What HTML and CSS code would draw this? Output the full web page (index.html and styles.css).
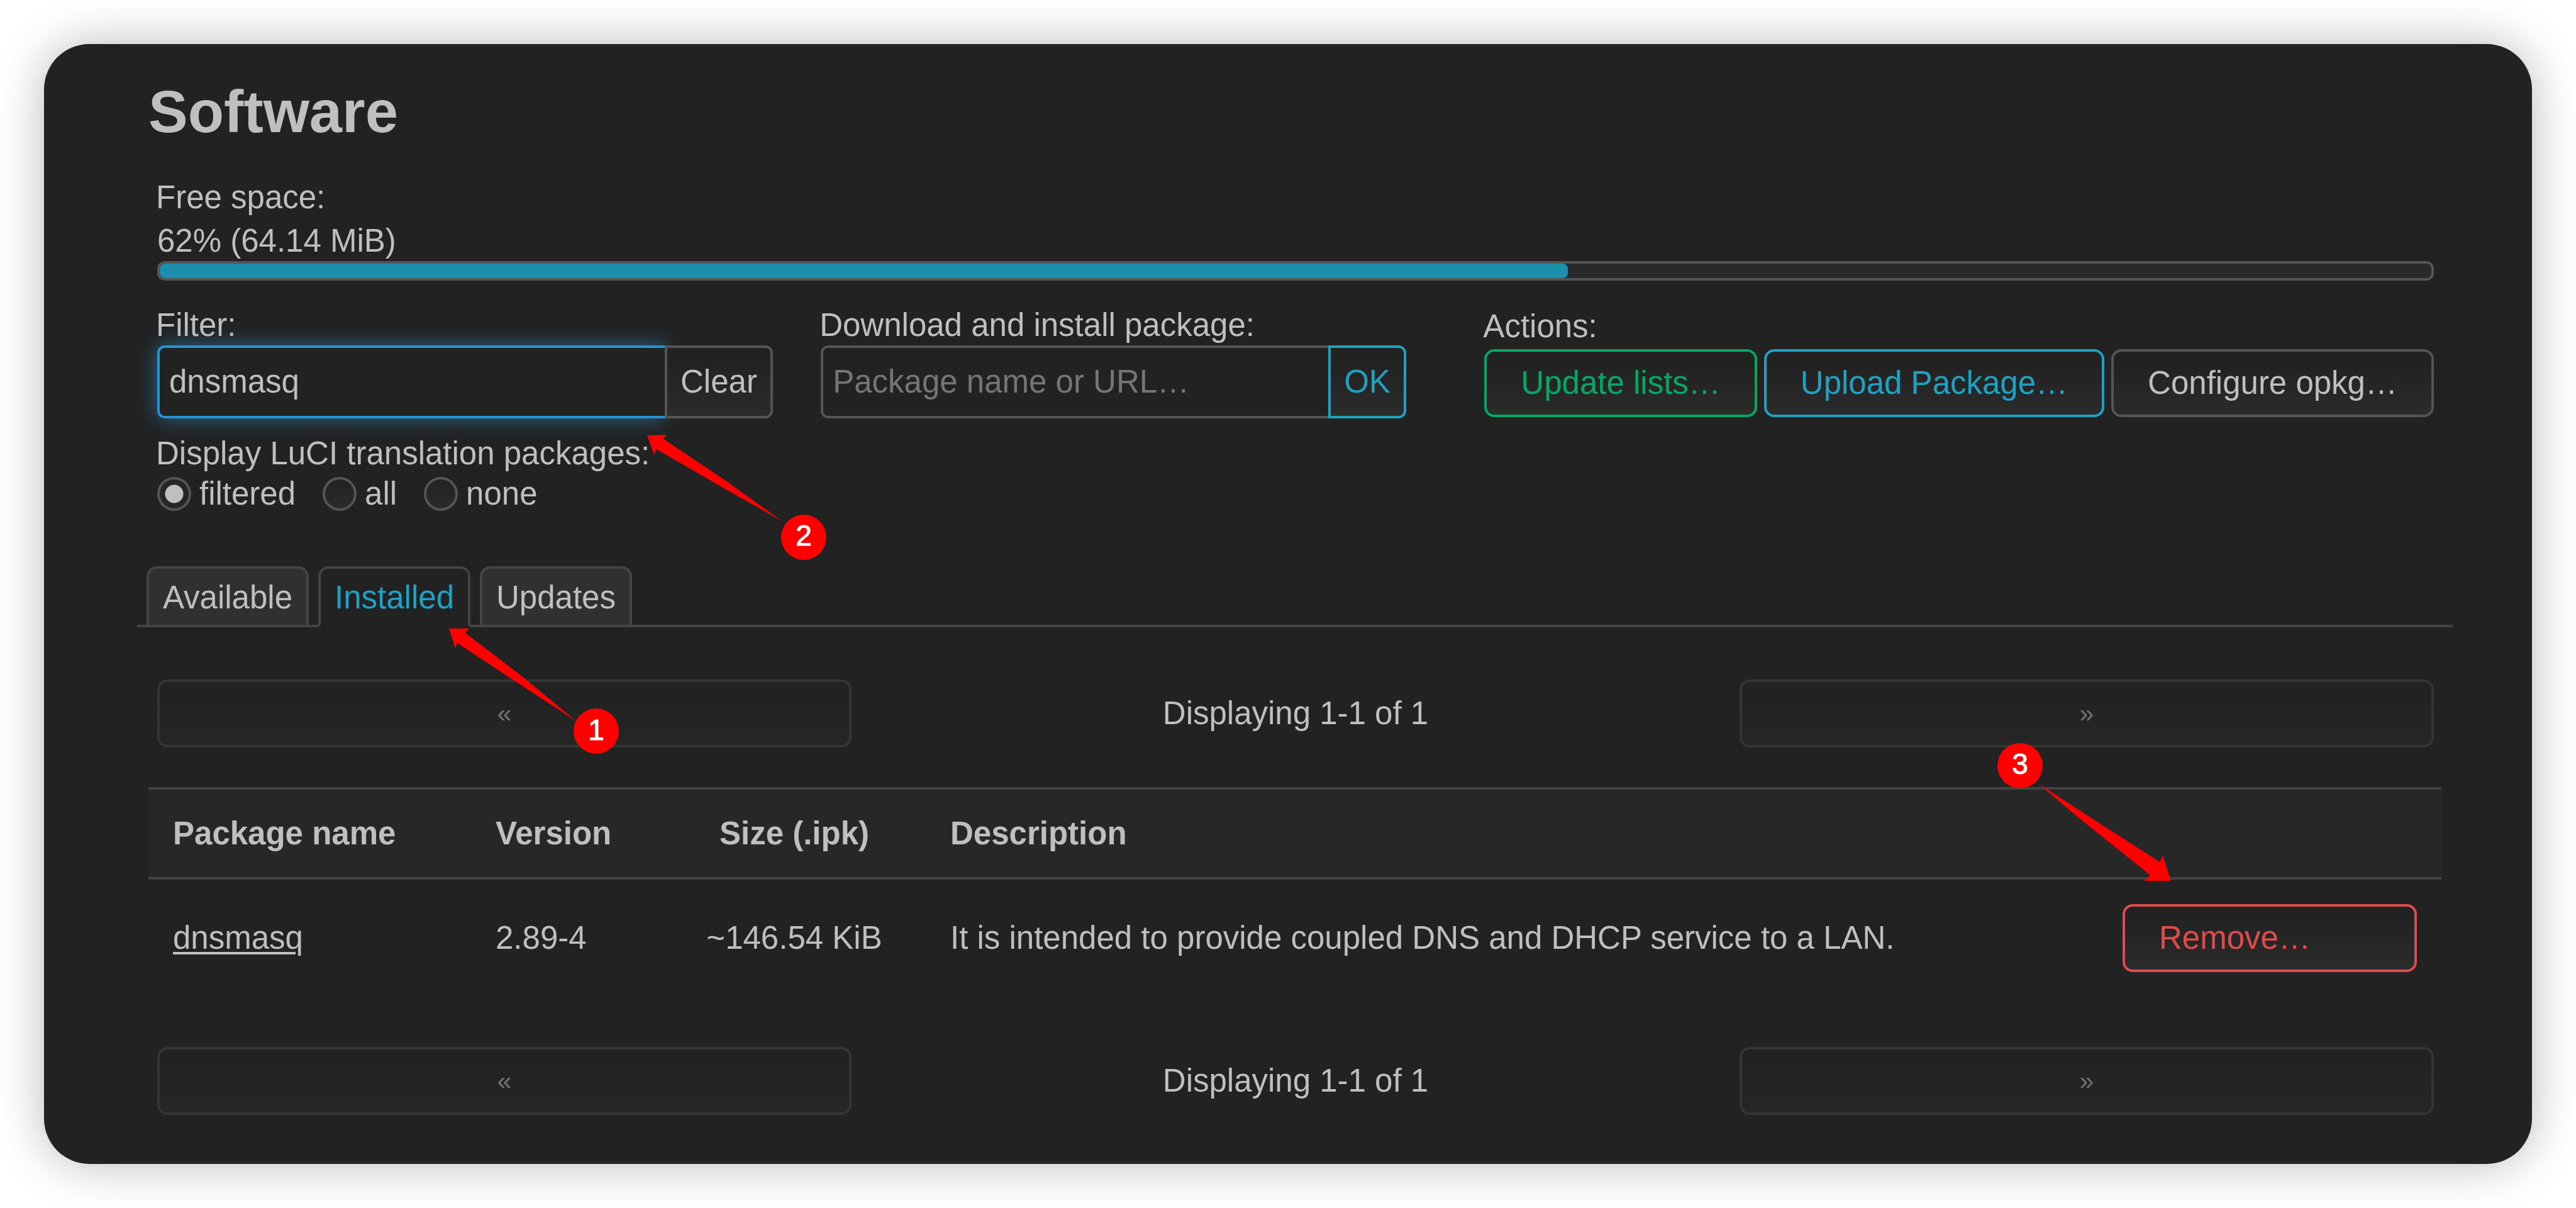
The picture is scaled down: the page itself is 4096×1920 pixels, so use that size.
FILE: index.html
```html
<!DOCTYPE html>
<html lang="en">
<head>
<meta charset="utf-8">
<title>Software</title>
<link rel="stylesheet" href="styles.css">
</head>
<body>
<main class="panel">
  <h1 class="title">Software</h1>

  <section class="section free-space">
    <div class="label">Free space:</div>
    <div class="progress-text">62% (64.14 MiB)</div>
    <div class="progress" role="progressbar" aria-valuenow="62" aria-valuemin="0" aria-valuemax="100"><div class="progress-fill" style="width: 62%"></div></div>
  </section>

  <form class="section controls">
    <div class="control">
      <label class="label" for="filter">Filter:</label>
      <div class="input-group">
        <input class="text-input text-input-focused" id="filter" type="text" value="dnsmasq">
        <button class="btn btn-joined" type="button">Clear</button>
      </div>
    </div>
    <div class="control">
      <label class="label" for="package">Download and install package:</label>
      <div class="input-group">
        <input class="text-input" id="package" type="text" placeholder="Package name or URL…">
        <button class="btn btn-joined btn-blue" type="button">OK</button>
      </div>
    </div>
    <div class="control control-actions">
      <div class="label">Actions:</div>
      <div class="actions">
        <button class="btn btn-green" type="button">Update lists…</button>
        <button class="btn btn-blue" type="button">Upload Package…</button>
        <button class="btn" type="button">Configure opkg…</button>
      </div>
    </div>
  </form>

  <section class="section translations">
    <div class="label">Display LuCI translation packages:</div>
    <div class="radios">
      <label class="radio"><input type="radio" name="i18n" checked>filtered</label>
      <label class="radio"><input type="radio" name="i18n">all</label>
      <label class="radio"><input type="radio" name="i18n">none</label>
    </div>
  </section>

  <nav class="tabs">
    <a class="tab" href="#available">Available</a>
    <a class="tab tab-active" href="#installed">Installed</a>
    <a class="tab" href="#updates">Updates</a>
  </nav>

  <div class="section pager">
    <button class="btn btn-page" type="button" disabled>«</button>
    <div class="pager-text">Displaying 1-1 of 1</div>
    <button class="btn btn-page" type="button" disabled>»</button>
  </div>

  <table class="packages">
    <thead>
      <tr>
        <th class="col-name">Package name</th>
        <th class="col-version">Version</th>
        <th class="col-size">Size (.ipk)</th>
        <th>Description</th>
        <th class="col-action"></th>
      </tr>
    </thead>
    <tbody>
      <tr>
        <td><a class="package-link" href="#dnsmasq">dnsmasq</a></td>
        <td>2.89-4</td>
        <td class="col-size">~146.54 KiB</td>
        <td>It is intended to provide coupled DNS and DHCP service to a LAN.</td>
        <td class="col-action"><button class="btn btn-red" type="button">Remove…</button></td>
      </tr>
    </tbody>
  </table>

  <div class="section pager">
    <button class="btn btn-page" type="button" disabled>«</button>
    <div class="pager-text">Displaying 1-1 of 1</div>
    <button class="btn btn-page" type="button" disabled>»</button>
  </div>
</main>

<svg class="annotations" viewBox="0 0 4096 1920">
  <path d="M714 999 L746 999 L740 1006 L834 1078 L916 1146 L821 1084 L727 1022 L724 1030 Z"/>
  <circle cx="948" cy="1162" r="36"/>
  <text x="948" y="1176">1</text>
  <path d="M1029 692 L1060 691 L1054 697 L1154 764 L1243 828 L1144 772 L1044 714 L1040 722 Z"/>
  <circle cx="1278" cy="854" r="36"/>
  <text x="1278" y="867">2</text>
  <path d="M3452 1400 L3409 1400 L3419 1391 L3303 1298 L3242 1246 L3342 1311 L3434 1370 L3439 1360 Z"/>
  <circle cx="3212" cy="1217" r="36"/>
  <text x="3212" y="1230">3</text>
</svg>
</body>
</html>
```
FILE: styles.css
```css
* {
  box-sizing: border-box;
}

body {
  position: relative;
  margin: 0;
  padding: 70px;
  background: #fff;
  color: #bfbfbf;
  font: 51px/64px "Liberation Sans", Arial, sans-serif;
}

.panel {
  padding: 38px 126px 78px 148px;
  border-radius: 72px;
  background: #222;
  box-shadow: 0 0 76px rgba(0, 0, 0, 0.28);
}

.title {
  margin: 0 18px 34px;
  font-size: 94px;
  line-height: 140px;
}

.section {
  margin: 0 30px 0 32px;
}

.label {
  display: block;
  margin-left: -2px;
}

/* Free space */

.progress-text {
  margin-top: 5px;
}

.progress {
  height: 31px;
  border: 4px solid #555;
  border-radius: 12px;
  background: #292929;
  overflow: hidden;
}

.progress-fill {
  height: 100%;
  border-radius: 8px;
  background: #1b8fab;
}

/* Filter, download, actions */

.controls {
  display: grid;
  grid-template-columns: 1fr 1fr auto;
  margin-top: 39px;
}

.control-actions {
  padding-top: 2px;
}

.input-group {
  display: flex;
  height: 116px;
}

.text-input {
  width: 807px;
  padding: 0 15px;
  border: 4px solid #555;
  border-right: 0;
  border-radius: 12px 0 0 12px;
  outline: 0;
  background: #222;
  color: inherit;
  font: inherit;
}

.text-input::placeholder {
  color: #757575;
  opacity: 1;
}

.text-input-focused {
  border-color: #2593cf;
  box-shadow: 0 0 32px rgba(44, 150, 210, 0.6);
}

.btn {
  height: 108px;
  padding: 0 54px;
  border: 4px solid #555;
  border-radius: 16px;
  background: linear-gradient(#222 20%, #2b2b2b);
  color: #bfbfbf;
  font: inherit;
  white-space: nowrap;
}

.btn-joined {
  position: relative;
  height: auto;
  padding: 0 21px;
  border-radius: 0 12px 12px 0;
}

.btn-green {
  border-color: #00a968;
  color: #00a968;
}

.btn-blue {
  border-color: #1ea2c3;
  color: #1ea2c3;
}

.btn-red {
  width: 100%;
  border-color: #e04b4b;
  color: #e04b4b;
  text-align: left;
}

.actions {
  display: flex;
  gap: 11px;
  margin-top: 4px;
}

/* Translation radios */

.translations {
  margin-top: 24px;
}

.radios {
  display: flex;
  gap: 43px;
}

.radio {
  display: flex;
  align-items: center;
  gap: 13px;
}

.radio input {
  appearance: none;
  width: 54px;
  height: 54px;
  margin: 0;
  border: 4px solid #555;
  border-radius: 50%;
  background: linear-gradient(#222, #2b2b2b);
}

.radio input:checked {
  background: radial-gradient(#bfbfbf 14px, #262626 15px);
}

/* Tabs */

.tabs {
  display: flex;
  gap: 15px;
  margin: 83px 0;
  padding-left: 15px;
  border-bottom: 4px solid #444;
}

.tab {
  margin-bottom: -4px;
  padding: 14px 22px 11px;
  border: 4px solid #444;
  border-radius: 16px 16px 0 0;
  background: #303030;
  color: inherit;
  text-decoration: none;
}

.tab-active {
  border-bottom-color: #222;
  background: #222;
  color: #1ea2c3;
}

/* Pager */

.pager {
  display: flex;
}

.btn-page {
  flex: 0 0 1104px;
  border-color: #484848;
  opacity: 0.5;
  font-size: 41px;
}

.pager-text {
  flex: 1;
  align-self: center;
  text-align: center;
}

/* Package table */

.packages {
  width: calc(100% - 36px);
  margin: 63px 18px 80px;
  border-spacing: 0;
  table-layout: fixed;
}

.packages th,
.packages td {
  padding: 39px;
  text-align: left;
}

.packages th {
  padding: 38px 39px 37px;
  border-top: 4px solid #444;
  border-bottom: 4px solid #444;
  background: #272727;
}

.packages .col-name {
  width: 513px;
}

.packages .col-version {
  width: 305px;
}

.packages .col-size {
  width: 418px;
  text-align: center;
}

.packages .col-action {
  width: 546px;
}

.packages .btn {
  display: block;
}

.package-link {
  color: inherit;
  text-decoration-thickness: 4px;
  text-underline-offset: 5px;
}

/* Numbered arrows over the page */

.annotations {
  position: absolute;
  top: 0;
  left: 0;
  width: 100%;
  fill: #f00;
  pointer-events: none;
}

.annotations text {
  fill: #fff;
  stroke: #fff;
  stroke-width: 1px;
  font-size: 46px;
  text-anchor: middle;
}
```
